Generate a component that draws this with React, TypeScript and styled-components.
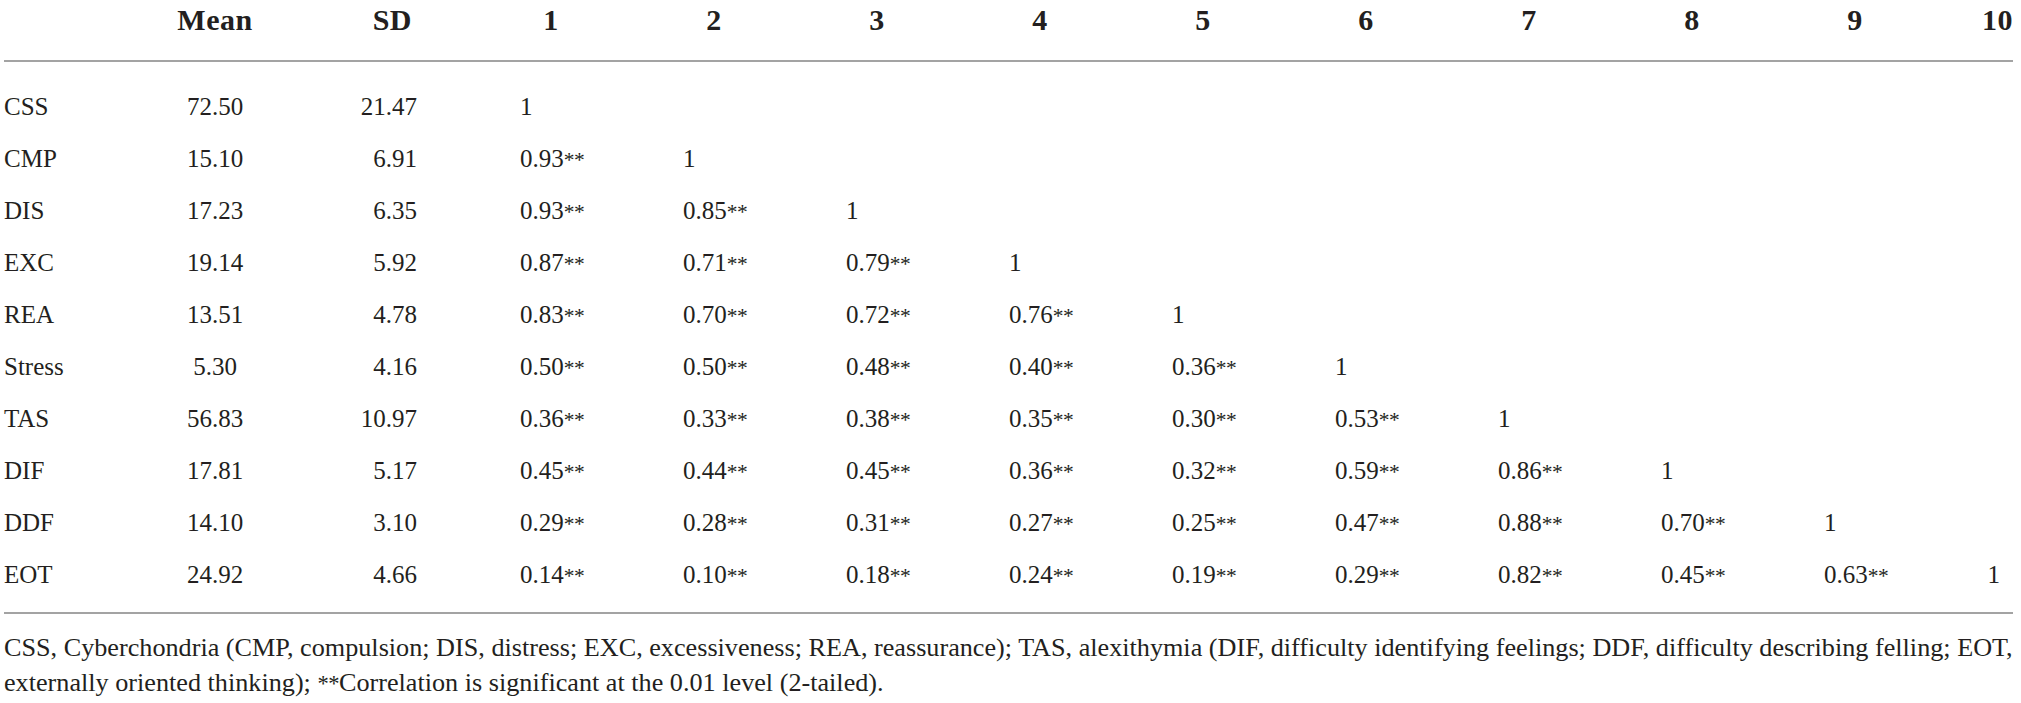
import styled, { createGlobalStyle } from "styled-components";

type Align = "left" | "center" | "right";

const ROWS: { label: string; mean: string; sd: string; r: string[] }[] = [
  { label: "CSS", mean: "72.50", sd: "21.47", r: ["1"] },
  { label: "CMP", mean: "15.10", sd: "6.91", r: ["0.93**", "1"] },
  { label: "DIS", mean: "17.23", sd: "6.35", r: ["0.93**", "0.85**", "1"] },
  { label: "EXC", mean: "19.14", sd: "5.92", r: ["0.87**", "0.71**", "0.79**", "1"] },
  { label: "REA", mean: "13.51", sd: "4.78", r: ["0.83**", "0.70**", "0.72**", "0.76**", "1"] },
  { label: "Stress", mean: "5.30", sd: "4.16", r: ["0.50**", "0.50**", "0.48**", "0.40**", "0.36**", "1"] },
  { label: "TAS", mean: "56.83", sd: "10.97", r: ["0.36**", "0.33**", "0.38**", "0.35**", "0.30**", "0.53**", "1"] },
  { label: "DIF", mean: "17.81", sd: "5.17", r: ["0.45**", "0.44**", "0.45**", "0.36**", "0.32**", "0.59**", "0.86**", "1"] },
  { label: "DDF", mean: "14.10", sd: "3.10", r: ["0.29**", "0.28**", "0.31**", "0.27**", "0.25**", "0.47**", "0.88**", "0.70**", "1"] },
  { label: "EOT", mean: "24.92", sd: "4.66", r: ["0.14**", "0.10**", "0.18**", "0.24**", "0.19**", "0.29**", "0.82**", "0.45**", "0.63**", "1"] },
];

const NUMS = ["1", "2", "3", "4", "5", "6", "7", "8", "9"];

const GlobalStyle = createGlobalStyle`
  html, body {
    margin: 0;
    padding: 0;
    background: #ffffff;
  }
  body {
    font-family: "Liberation Serif", "Times New Roman", serif;
    color: #231f20;
  }
`;

const COLS = "146px 130px 189.5px repeat(9, 163px) 76.5px";

const Page = styled.div`
  width: 2021px;
  height: 703px;
  overflow: hidden;
  padding-left: 4px;
  box-sizing: border-box;
`;

const Table = styled.div`
  width: 2009px;
`;

const HeadRow = styled.div`
  display: grid;
  grid-template-columns: ${COLS};
  height: 60px;
  border-bottom: 2px solid #a3a3a3;
`;

const HeadCell = styled.div<{ $align?: Align; $padRight?: number }>`
  padding-top: 2px;
  font-size: 30px;
  line-height: 36px;
  font-weight: 700;
  letter-spacing: 0.5px;
  text-align: ${(p) => p.$align ?? "center"};
  padding-right: ${(p) => p.$padRight ?? 0}px;
  white-space: nowrap;
`;

const Body = styled.div`
  padding: 18.5px 0 11.5px;
  border-bottom: 2px solid #a3a3a3;
`;

const BodyRow = styled.div`
  display: grid;
  grid-template-columns: ${COLS};
  height: 52px;
`;

const Cell = styled.div<{ $align?: Align; $padLeft?: number; $padRight?: number }>`
  font-size: 25px;
  line-height: 52px;
  text-align: ${(p) => p.$align ?? "left"};
  padding-left: ${(p) => p.$padLeft ?? 0}px;
  padding-right: ${(p) => p.$padRight ?? 0}px;
  white-space: nowrap;
`;

const Stars = styled.span`
  font-size: 0.86em;
  letter-spacing: -0.5px;
`;

const Note = styled.p`
  margin: 0;
  padding-top: 15.5px;
  font-size: 26.2px;
  line-height: 35px;
  white-space: nowrap;
`;

const Value = ({ v }: { v?: string }) => {
  if (!v) return null;
  if (!v.endsWith("**")) return <>{v}</>;
  return (
    <>
      {v.slice(0, -2)}
      <Stars>**</Stars>
    </>
  );
};

export default function App() {
  return (
    <Page>
      <GlobalStyle />
      <Table>
        <HeadRow>
          <HeadCell />
          <HeadCell>Mean</HeadCell>
          <HeadCell $align="right" $padRight={57.5}>
            SD
          </HeadCell>
          {NUMS.map((n) => (
            <HeadCell key={n}>{n}</HeadCell>
          ))}
          <HeadCell $align="right">10</HeadCell>
        </HeadRow>
        <Body>
          {ROWS.map((row) => (
            <BodyRow key={row.label}>
              <Cell>{row.label}</Cell>
              <Cell $align="center">{row.mean}</Cell>
              <Cell $align="right" $padRight={52.5}>
                {row.sd}
              </Cell>
              {NUMS.map((_, i) => (
                <Cell key={i} $padLeft={50.5}>
                  <Value v={row.r[i]} />
                </Cell>
              ))}
              <Cell $align="right" $padRight={13}>
                <Value v={row.r[9]} />
              </Cell>
            </BodyRow>
          ))}
        </Body>
        <Note>
          CSS, Cyberchondria (CMP, compulsion; DIS, distress; EXC, excessiveness; REA, reassurance); TAS,
          alexithymia (DIF, difficulty identifying feelings; DDF, difficulty describing felling; EOT,
          <br />
          externally oriented thinking); <Stars>**</Stars>Correlation is significant at the 0.01 level
          (2-tailed).
        </Note>
      </Table>
    </Page>
  );
}
